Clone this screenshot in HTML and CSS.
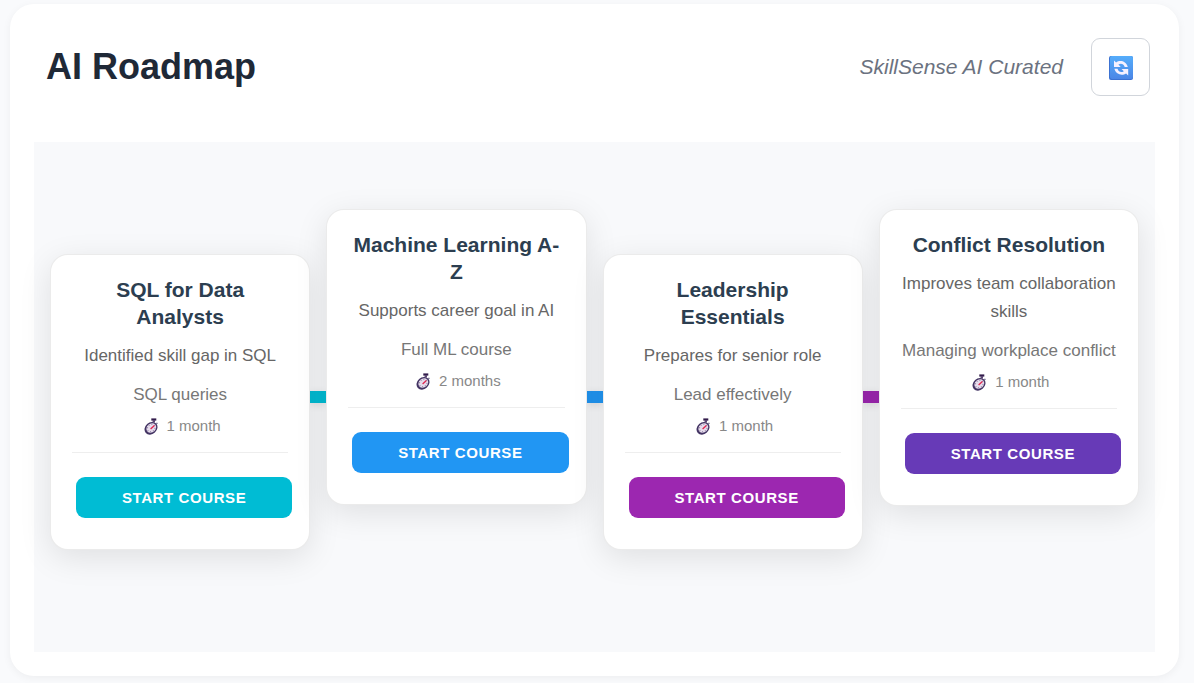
FILE: index.html
```html
<!DOCTYPE html>
<html lang="en">
<head>
<meta charset="utf-8">
<meta name="viewport" content="width=device-width, initial-scale=1">
<title>AI Roadmap</title>
<link rel="stylesheet" href="styles.css">
</head>
<body>
<svg class="sprite" aria-hidden="true">
  <symbol id="stopwatch" viewBox="0 0 16 18">
    <path d="M8.3 1.4h5v2.2H8.3z" fill="#321c4b"/>
    <path d="M9.8 3h2.2v2.6H9.4z" fill="#5b4672"/>
    <path d="m13.5 5.8.9.9" stroke="#433b6b" stroke-width="1.2"/>
    <ellipse cx="8" cy="11.3" rx="7" ry="5.8" transform="rotate(-42 8 11.3)" fill="#433463"/>
    <ellipse cx="8.3" cy="11" rx="5.3" ry="4.4" transform="rotate(-42 8.3 11)" fill="#e6dcec"/>
    <ellipse cx="8.3" cy="11" rx="4.3" ry="3.4" transform="rotate(-42 8.3 11)" fill="none" stroke="#8d7da0" stroke-width="1" stroke-dasharray="1 1.9"/>
    <path d="M7.6 11.9 11.4 8.4" stroke="#e0244f" stroke-width="1.3"/>
  </symbol>
</svg>
<main class="panel">
  <header class="header">
    <h1 class="heading">AI Roadmap</h1>
    <div class="tools">
      <span class="curated">SkillSense AI Curated</span>
      <button class="refresh" type="button" aria-label="Refresh roadmap">
        <svg class="refresh-icon" viewBox="0 0 24 24" aria-hidden="true">
          <defs>
            <linearGradient id="tile" x1="0" y1="0" x2="0" y2="1">
              <stop offset="0" stop-color="#55adfb"/>
              <stop offset="1" stop-color="#4b86e6"/>
            </linearGradient>
          </defs>
          <rect width="24" height="24" rx="2" fill="#3c72d2"/>
          <rect x="1" width="23" height="23" rx="2" fill="url(#tile)"/>
          <g fill="#f6f1ff">
            <path d="M5 4.4 7.1 6.4C10.8 3.9 17 4.8 18.8 11h-3.1C14.6 7.6 11.7 7 9.4 8.6l2.3 2.3H5z"/>
            <path d="m19.2 19.4-2.1-2C13.4 19.9 7.2 19 5.4 12.8h3.1c1.1 3.4 4 4 6.3 2.4l-2.3-2.3h6.7z"/>
          </g>
        </svg>
      </button>
    </div>
  </header>
  <section class="track" aria-label="Courses">
    <article class="card card-low teal">
      <h2 class="title">SQL for Data Analysts</h2>
      <p class="reason">Identified skill gap in SQL</p>
      <p class="about">SQL queries</p>
      <p class="time"><svg class="watch" aria-hidden="true"><use href="#stopwatch"/></svg>1 month</p>
      <button class="start" type="button">START COURSE</button>
    </article>
    <span class="link teal"></span>
    <article class="card blue">
      <h2 class="title">Machine Learning A-Z</h2>
      <p class="reason">Supports career goal in AI</p>
      <p class="about">Full ML course</p>
      <p class="time"><svg class="watch" aria-hidden="true"><use href="#stopwatch"/></svg>2 months</p>
      <button class="start" type="button">START COURSE</button>
    </article>
    <span class="link blue"></span>
    <article class="card card-low purple">
      <h2 class="title">Leadership Essentials</h2>
      <p class="reason">Prepares for senior role</p>
      <p class="about">Lead effectively</p>
      <p class="time"><svg class="watch" aria-hidden="true"><use href="#stopwatch"/></svg>1 month</p>
      <button class="start" type="button">START COURSE</button>
    </article>
    <span class="link purple"></span>
    <article class="card violet">
      <h2 class="title">Conflict Resolution</h2>
      <p class="reason">Improves team collaboration skills</p>
      <p class="about">Managing workplace conflict</p>
      <p class="time"><svg class="watch" aria-hidden="true"><use href="#stopwatch"/></svg>1 month</p>
      <button class="start" type="button">START COURSE</button>
    </article>
  </section>
</main>
</body>
</html>
```
FILE: styles.css
```css
* {
  box-sizing: border-box;
}

body {
  margin: 0;
  padding: 4px 15px 7px 10px;
  background: #f9fafc;
  font-family: "Liberation Sans", Arial, sans-serif;
}

.sprite {
  position: absolute;
  width: 0;
  height: 0;
}

.panel {
  padding: 24px;
  border-radius: 24px;
  background: #fff;
  box-shadow: 0 2px 8px rgba(0, 0, 0, 0.05);
}

.header {
  display: flex;
  align-items: center;
  justify-content: space-between;
  padding: 10px 5px 46px 12px;
}

.heading {
  margin: 0;
  color: #1f2937;
  font-size: 36px;
  line-height: 40px;
}

.tools {
  display: flex;
  align-items: center;
  gap: 28px;
}

.curated {
  color: #6b7280;
  font-size: 21px;
  font-style: italic;
}

.refresh {
  display: grid;
  place-items: center;
  width: 59px;
  height: 58px;
  padding: 2px 0 0;
  border: 1px solid #d1d5db;
  border-radius: 9px;
  background: #fff;
}

.refresh-icon {
  width: 24px;
  height: 24px;
}

.track {
  display: flex;
  align-items: flex-start;
  padding: 67px 16px 102px;
  background: #f8f9fb;
}

.card {
  position: relative;
  z-index: 1;
  flex: 1 1 0;
  min-width: 0;
  padding: 21px 21px 23px;
  border: 1px solid rgba(0, 0, 0, 0.08);
  border-radius: 18px;
  background: #fff;
  box-shadow: 0 8px 32px rgba(0, 0, 0, 0.1);
  text-align: center;
}

.card-low {
  margin-top: 45px;
}

.link {
  flex: 0 0 16px;
  height: 12px;
  margin-top: 182px;
  background: var(--accent);
  box-shadow: 0 2px 8px rgba(0, 0, 0, 0.1);
}

.teal { --accent: #00bcd4; }
.blue { --accent: #2196f3; }
.purple { --accent: #9c27b0; }
.violet { --accent: #673ab7; }

.title {
  margin: 0 0 12px;
  color: #2c3e50;
  font-size: 21px;
  line-height: 27px;
}

.reason,
.about {
  margin: 0;
  font-size: 17px;
  line-height: 28px;
}

.reason {
  margin-bottom: 11px;
  color: #666;
}

.about {
  margin-bottom: 5px;
  color: #777;
}

.time {
  display: flex;
  align-items: center;
  justify-content: center;
  gap: 8px;
  margin: 0;
  padding: 0 0 14px 3px;
  border-bottom: 1px solid #eee;
  color: #888;
  font-size: 15px;
  line-height: 24px;
}

.watch {
  width: 16px;
  height: 18px;
}

.start {
  width: 100%;
  height: 41px;
  margin: 24px 0 8px 4px;
  border: 0;
  border-radius: 9px;
  background: var(--accent);
  color: #fff;
  font: bold 15px "Liberation Sans", Arial, sans-serif;
  letter-spacing: 0.04em;
}
```
